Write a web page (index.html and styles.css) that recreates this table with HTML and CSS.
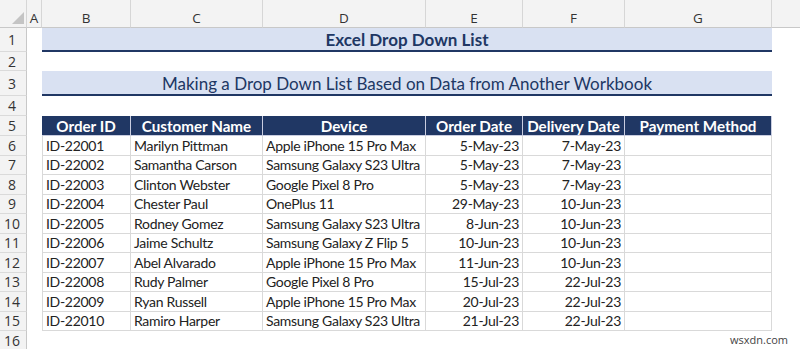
FILE: index.html
```html
<!DOCTYPE html>
<html>
<head>
<meta charset="utf-8">
<link rel="stylesheet" href="styles.css">
</head>
<body>
<div class="sheet">
  <div class="corner"><span class="tri"></span></div>
  <div class="colhdr">A</div>
  <div class="colhdr">B</div>
  <div class="colhdr">C</div>
  <div class="colhdr">D</div>
  <div class="colhdr">E</div>
  <div class="colhdr">F</div>
  <div class="colhdr">G</div>
  <div class="colhdr rest"></div>

  <div class="rowhdr">1</div>
  <div class="blank"></div>
  <div class="band title">Excel Drop Down List</div>
  <div class="blank"></div>

  <div class="rowhdr">2</div>
  <div class="blank wide"></div>

  <div class="rowhdr">3</div>
  <div class="blank"></div>
  <div class="band subtitle">Making a Drop Down List Based on Data from Another Workbook</div>
  <div class="blank"></div>

  <div class="rowhdr">4</div>
  <div class="blank wide"></div>

  <div class="rowhdr">5</div>
  <div class="blank"></div>
  <div class="th first">Order ID</div>
  <div class="th">Customer Name</div>
  <div class="th">Device</div>
  <div class="th">Order Date</div>
  <div class="th">Delivery Date</div>
  <div class="th">Payment Method</div>
  <div class="blank"></div>

  <div class="rowhdr">6</div><div class="blank"></div>
  <div class="td first">ID-22001</div><div class="td">Marilyn Pittman</div><div class="td">Apple iPhone 15 Pro Max</div><div class="td num">5-May-23</div><div class="td num">7-May-23</div><div class="td"></div><div class="blank"></div>

  <div class="rowhdr">7</div><div class="blank"></div>
  <div class="td first">ID-22002</div><div class="td">Samantha Carson</div><div class="td">Samsung Galaxy S23 Ultra</div><div class="td num">5-May-23</div><div class="td num">7-May-23</div><div class="td"></div><div class="blank"></div>

  <div class="rowhdr">8</div><div class="blank"></div>
  <div class="td first">ID-22003</div><div class="td">Clinton Webster</div><div class="td">Google Pixel 8 Pro</div><div class="td num">5-May-23</div><div class="td num">7-May-23</div><div class="td"></div><div class="blank"></div>

  <div class="rowhdr">9</div><div class="blank"></div>
  <div class="td first">ID-22004</div><div class="td">Chester Paul</div><div class="td">OnePlus 11</div><div class="td num">29-May-23</div><div class="td num">10-Jun-23</div><div class="td"></div><div class="blank"></div>

  <div class="rowhdr">10</div><div class="blank"></div>
  <div class="td first">ID-22005</div><div class="td">Rodney Gomez</div><div class="td">Samsung Galaxy S23 Ultra</div><div class="td num">8-Jun-23</div><div class="td num">10-Jun-23</div><div class="td"></div><div class="blank"></div>

  <div class="rowhdr">11</div><div class="blank"></div>
  <div class="td first">ID-22006</div><div class="td">Jaime Schultz</div><div class="td">Samsung Galaxy Z Flip 5</div><div class="td num">10-Jun-23</div><div class="td num">10-Jun-23</div><div class="td"></div><div class="blank"></div>

  <div class="rowhdr">12</div><div class="blank"></div>
  <div class="td first">ID-22007</div><div class="td">Abel Alvarado</div><div class="td">Apple iPhone 15 Pro Max</div><div class="td num">11-Jun-23</div><div class="td num">10-Jun-23</div><div class="td"></div><div class="blank"></div>

  <div class="rowhdr">13</div><div class="blank"></div>
  <div class="td first">ID-22008</div><div class="td">Rudy Palmer</div><div class="td">Google Pixel 8 Pro</div><div class="td num">15-Jul-23</div><div class="td num">22-Jul-23</div><div class="td"></div><div class="blank"></div>

  <div class="rowhdr">14</div><div class="blank"></div>
  <div class="td first">ID-22009</div><div class="td">Ryan Russell</div><div class="td">Apple iPhone 15 Pro Max</div><div class="td num">20-Jul-23</div><div class="td num">22-Jul-23</div><div class="td"></div><div class="blank"></div>

  <div class="rowhdr">15</div><div class="blank"></div>
  <div class="td first">ID-22010</div><div class="td">Ramiro Harper</div><div class="td">Samsung Galaxy S23 Ultra</div><div class="td num">21-Jul-23</div><div class="td num">22-Jul-23</div><div class="td"></div><div class="blank"></div>

  <div class="rowhdr">16</div>
  <div class="blank wide"></div>
</div>
<div class="watermark">wsxdn.com</div>
</body>
</html>
```

FILE: styles.css
```css
html, body {
  margin: 0;
  padding: 0;
  background: #ffffff;
}
body {
  width: 800px;
  height: 349px;
  overflow: hidden;
  position: relative;
  font-family: Lato, "Open Sans", sans-serif;
}
.sheet {
  display: grid;
  grid-template-columns: 27px 15px 89px 132px 163px 97px 102px 147px 1fr;
  grid-template-rows: 28px 24px 19px 25px 20px 20px repeat(10, 19.5px) 1fr;
  height: 349px;
}
.corner {
  background: #f3f3f3;
  border-right: 1px solid #d6d6d6;
  border-bottom: 1px solid #c8c8c8;
  box-sizing: border-box;
  position: relative;
}
.tri {
  position: absolute;
  right: 2px;
  bottom: 3px;
  width: 0;
  height: 0;
  border-left: 12px solid transparent;
  border-bottom: 12px solid #c4c4c4;
}
.colhdr {
  background: #f3f3f3;
  border-right: 1px solid #d6d6d6;
  border-bottom: 1px solid #c8c8c8;
  box-sizing: border-box;
  font-family: "Open Sans", sans-serif;
  font-size: 13.5px;
  color: #333;
  display: flex;
  align-items: center;
  justify-content: center;
  padding-top: 8px;
}
.colhdr.rest {
  border-right: none;
}
.rowhdr {
  background: #f3f3f3;
  border-right: 1px solid #c8c8c8;
  border-bottom: 1px solid #dadada;
  box-sizing: border-box;
  font-family: "Open Sans", sans-serif;
  font-size: 14px;
  color: #333;
  display: flex;
  align-items: center;
  justify-content: center;
  padding-right: 2px;
}
.blank.wide {
  grid-column: span 8;
}
.band {
  grid-column: span 6;
  background: #d9e1f2;
  border-bottom: 2px solid #203764;
  box-sizing: border-box;
  color: #203764;
  display: flex;
  align-items: center;
  justify-content: center;
}
.title {
  font-weight: bold;
  font-size: 17px;
}
.subtitle {
  font-size: 17px;
  padding-top: 2px;
}
.th {
  background: #203764;
  color: #ffffff;
  font-weight: bold;
  font-size: 15.2px;
  display: flex;
  align-items: center;
  justify-content: center;
  border-right: 1px solid #c9cde0;
  border-bottom: 1px solid #c9cde0;
  box-sizing: border-box;
}
.td {
  font-size: 14px;
  letter-spacing: -0.3px;
  color: #222;
  display: flex;
  align-items: center;
  padding: 0 3px;
  border-right: 1px solid #d9d9d9;
  border-bottom: 1px solid #d9d9d9;
  box-sizing: border-box;
  white-space: nowrap;
}
.first {
  border-left: 1px solid #d9d9d9;
}
.th.first {
  border-left: none;
}
.td.num {
  justify-content: flex-end;
}
.watermark {
  position: absolute;
  right: 12px;
  bottom: 2px;
  font-family: "Open Sans", sans-serif;
  font-size: 11px;
  color: #444;
}
```
